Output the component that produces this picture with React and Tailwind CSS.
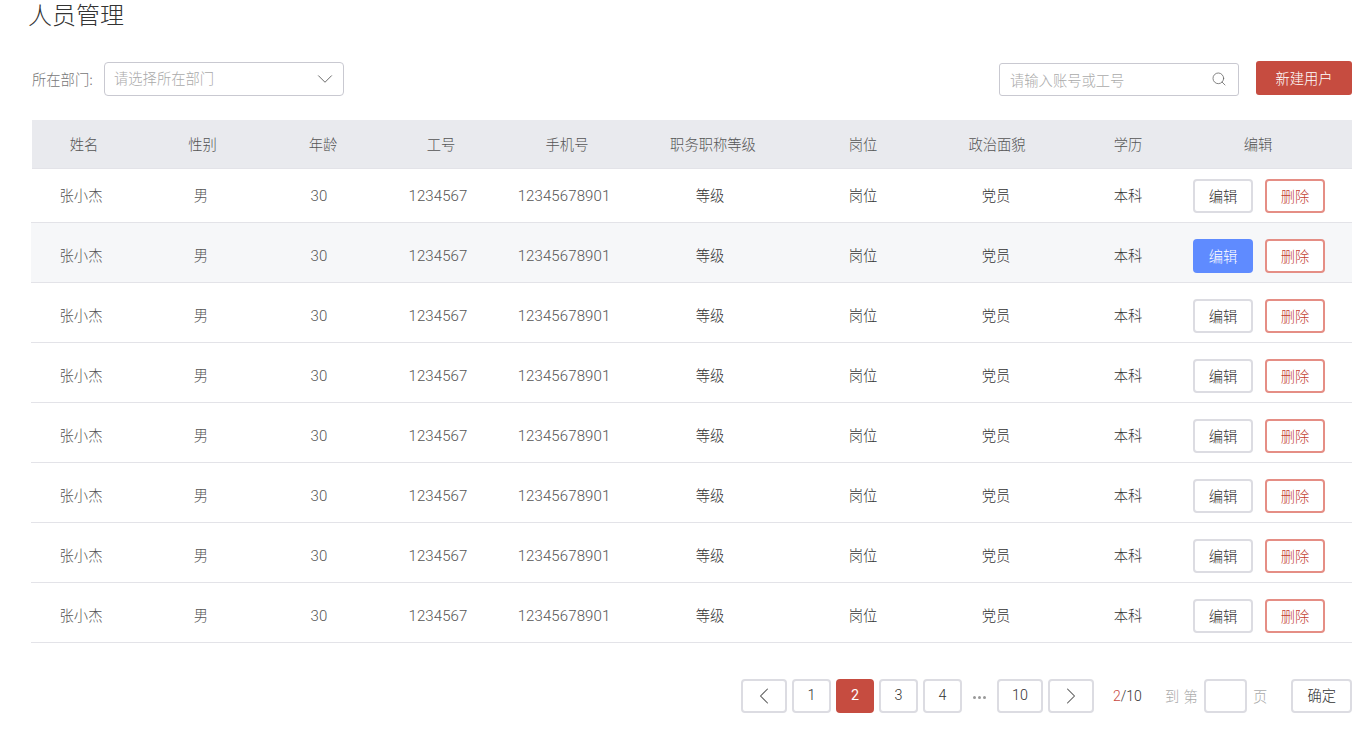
import React from "react";
import { ChevronDown, ChevronLeft, ChevronRight, Search } from "lucide-react";

const font = "font-['Noto_Sans_CJK_SC','Liberation_Sans',sans-serif]";
const headCols = "grid-cols-[104px_133px_108px_128px_124px_168px_132px_136px_126px_134px_27px]";
const rowCols = "grid-cols-[104px_132px_104px_134px_118px_174px_132px_134px_130px_1fr]";

const headers = ["姓名", "性别", "年龄", "工号", "手机号", "职务职称等级", "岗位", "政治面貌", "学历", "编辑"];
const row = ["张小杰", "男", "30", "1234567", "12345678901", "等级", "岗位", "党员", "本科"];
const pageBtn = "h-[34px] border-2 border-[#dcdce2] rounded-[4px] flex items-center justify-center text-[14.3px] text-[#333] font-light";

function cellClass(i) {
  if (i === 0) return "-mt-[1px] pr-[4px] text-[#555] font-light text-[14.3px]";
  if (i >= 2 && i <= 4) return "font-['Roboto',sans-serif] text-[#555] font-light text-[15px] tracking-[0.1px]";
  if (i === 1) return "-mt-[1px] text-[#555] font-light text-[14.3px]";
  return "-mt-[1px] text-[#333] font-light text-[14.3px]";
}

function Row({ index }) {
  const active = index === 1;
  return (
    <div className={`grid ${rowCols} border-b border-[#e3e3e8] ${index === 0 ? "h-[54px] pt-[10px]" : "h-[60px] pt-[16px]"} ${active ? "bg-[#f6f7f9]" : ""}`}>
      {row.map((text, i) => (
        <div key={i} className={`text-center leading-[34px] ${cellClass(i)}`}>
          {text}
        </div>
      ))}
      <div className="flex gap-3">
        <button
          className={`w-[60px] h-[34px] rounded-[4px] text-[14.3px] font-light ${active ? "bg-[#5f8bff] text-white" : "bg-white border-2 border-[#dcdce2] text-[#333]"}`}
        >
          编辑
        </button>
        <button className="w-[60px] h-[34px] rounded-[4px] bg-white border-2 border-[#e58e85] text-[14.3px] text-[#c23c30] font-light">
          删除
        </button>
      </div>
    </div>
  );
}

export default function App() {
  return (
    <div className={`w-[1358px] h-[736px] overflow-hidden bg-white ${font}`}>
      <h1 className="pl-[28px] h-[32px] text-[24px] leading-[30px] -mt-[1px] font-light text-[#333]">人员管理</h1>

      {/* filter bar */}
      <div className="flex items-start pl-[32px] pr-[6px] mt-[30px] h-[59px]">
        <span className="text-[14.3px] leading-[36px] text-[#777] font-light w-[72px]">所在部门:</span>
        <div className="w-[240px] h-[34px] mt-[1px] border border-[#c9c9d1] rounded-[4px] flex items-center justify-between pl-[9px] pr-[9px]">
          <span className="text-[14.3px] leading-[30px] -mt-[2px] text-[#aaa] font-light">请选择所在部门</span>
          <ChevronDown size={26} strokeWidth={0.9} className="text-[#666] -mr-[4px]" />
        </div>
        <div className="ml-auto w-[240px] h-[33px] mt-[2px] border border-[#c9c9d1] rounded-[3px] flex items-center justify-between pl-[10px] pr-[11px]">
          <span className="text-[14.3px] text-[#aaa] font-light">请输入账号或工号</span>
          <Search size={16} strokeWidth={1.2} className="text-[#666] -mt-[2px]" />
        </div>
        <button className="ml-[17px] w-[96px] h-[34px] bg-[#c64c40] rounded-[3px] text-white text-[14.3px] font-light">
          新建用户
        </button>
      </div>

      {/* table */}
      <div className="ml-[31px] w-[1321px]">
        <div className={`grid ${headCols} ml-[1px] h-[49px] bg-[#e9eaee] border-b border-[#e3e3e8] items-center`}>
          {headers.map((h) => (
            <div key={h} className="text-center text-[14.3px] text-[#555] font-light">
              {h}
            </div>
          ))}
        </div>
        {[0, 1, 2, 3, 4, 5, 6, 7].map((i) => (
          <Row key={i} index={i} />
        ))}
      </div>

      {/* pagination */}
      <div className="flex items-center mt-[36px] ml-[741px] text-[14.3px]">
        <button className={`${pageBtn} w-[46px]`}>
          <ChevronLeft size={28} strokeWidth={0.9} className="text-[#555]" />
        </button>
        <button className={`${pageBtn} w-[39px] ml-[5px] font-['Roboto',sans-serif]`}>1</button>
        <button className="h-[34px] w-[38px] ml-[5px] bg-[#c64c40] rounded-[4px] text-white text-[14.3px] font-['Roboto',sans-serif]">2</button>
        <button className={`${pageBtn} w-[39px] ml-[5px] font-['Roboto',sans-serif]`}>3</button>
        <button className={`${pageBtn} w-[39px] ml-[5px] font-['Roboto',sans-serif]`}>4</button>
        <div className="w-[35px] flex justify-center gap-[2px] pt-[2px]">
          <span className="w-[3px] h-[3px] rounded-full bg-[#999]" />
          <span className="w-[3px] h-[3px] rounded-full bg-[#999]" />
          <span className="w-[3px] h-[3px] rounded-full bg-[#999]" />
        </div>
        <button className={`${pageBtn} w-[46px] font-['Roboto',sans-serif]`}>10</button>
        <button className={`${pageBtn} w-[46px] ml-[5px]`}>
          <ChevronRight size={28} strokeWidth={0.9} className="text-[#555]" />
        </button>
        <span className="ml-[19px] w-[52px] text-[14px] pt-[1px] font-light text-[#333] font-['Roboto',sans-serif]">
          <span className="text-[#c8493f]">2</span>/10
        </span>
        <span className="w-[39px] text-[#aaa] font-light tracking-[0.5px] whitespace-nowrap">到 第</span>
        <div className="w-[43px] h-[34px] border-2 border-[#dcdce2] rounded-[4px]" />
        <span className="ml-[6px] text-[#aaa] font-light">页</span>
        <button className={`${pageBtn} w-[61px] ml-[24px] pb-[3px]`}>确定</button>
      </div>
    </div>
  );
}
